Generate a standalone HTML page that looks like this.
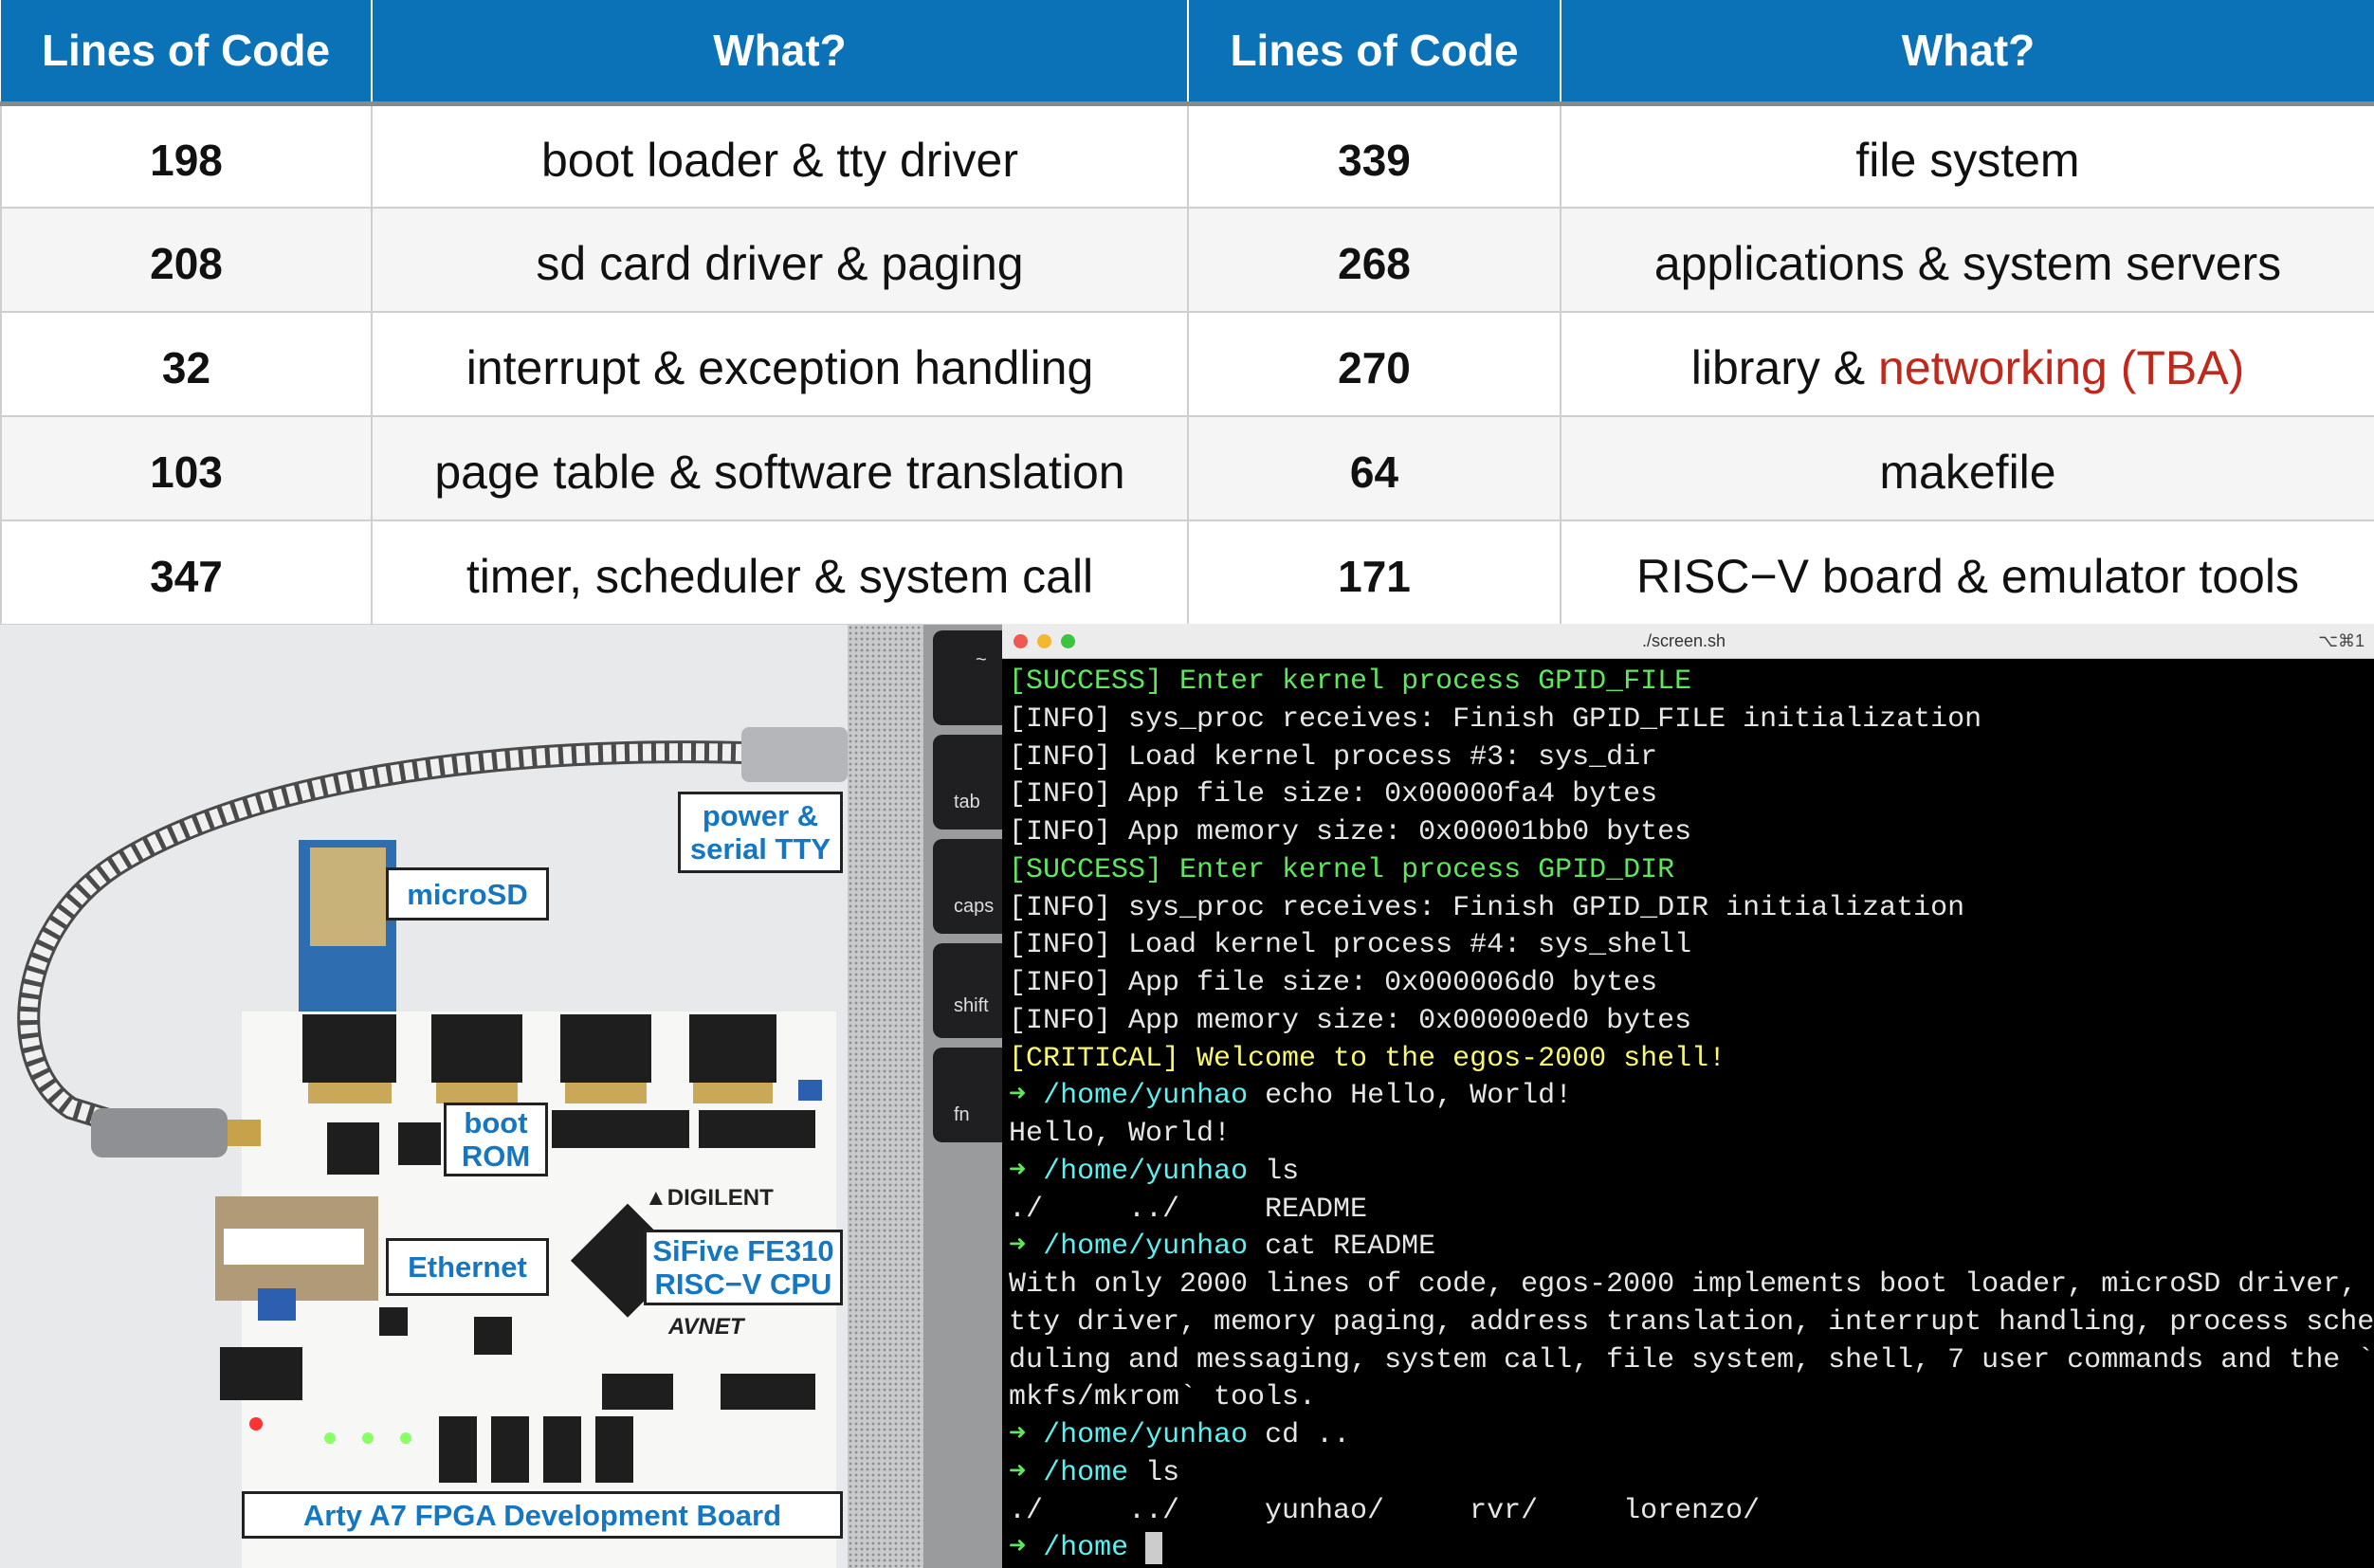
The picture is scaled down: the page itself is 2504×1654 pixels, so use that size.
<!DOCTYPE html>
<html><head><meta charset="utf-8"><style>
*{margin:0;padding:0;box-sizing:border-box}
body{width:2504px;height:1654px;overflow:hidden;background:#fff;font-family:"Liberation Sans",Arial,sans-serif;position:relative}
table{position:absolute;left:0;top:0;width:2504px;border-collapse:collapse;table-layout:fixed}
th{background:#0b72b7;color:#fff;font-size:46px;font-weight:bold;height:109px;border-left:2px solid #fff;border-bottom:5px solid #8a8a8a}
td{height:110px;font-size:50px;text-align:center;color:#111;border:2px solid #cfcfcf;padding-top:8px}
td.n{font-weight:bold;font-size:46px}
tr.g td{background:#f5f5f5}
.red{color:#c0281c}
.term{position:absolute;left:1057px;top:658px;width:1447px;height:996px;background:#000}
.tb{height:37px;background:#ececec;position:relative;border-bottom:1px solid #ccc}
.tb span{position:absolute;top:11px;width:15px;height:15px;border-radius:50%}
.tb .t{position:absolute;left:675px;top:8px;font-size:18px;color:#333}
.tx{font-family:"Liberation Mono","DejaVu Sans Mono",monospace;font-size:30px;line-height:39.75px;color:#e6e6e6;padding:5px 0 0 7px;white-space:pre}
.gr{color:#5fe65f}.ye{color:#f8f870}.cy{color:#5ef0f0}
.lbl{position:absolute;background:#fff;border:3px solid #222;color:#1577c2;font-weight:bold;text-align:center;font-size:31px;line-height:35px;display:flex;align-items:center;justify-content:center}
</style></head><body>
<table>
<colgroup><col style="width:391px"><col style="width:861px"><col style="width:393px"><col style="width:859px"></colgroup>
<tr><th style="border-left:none">Lines of Code</th><th>What?</th><th>Lines of Code</th><th>What?</th></tr>
<tr><td class="n">198</td><td>boot loader &amp; tty driver</td><td class="n">339</td><td>file system</td></tr>
<tr class="g"><td class="n">208</td><td>sd card driver &amp; paging</td><td class="n">268</td><td>applications &amp; system servers</td></tr>
<tr><td class="n">32</td><td>interrupt &amp; exception handling</td><td class="n">270</td><td>library &amp; <span class="red">networking (TBA)</span></td></tr>
<tr class="g"><td class="n">103</td><td>page table &amp; software translation</td><td class="n">64</td><td>makefile</td></tr>
<tr><td class="n">347</td><td>timer, scheduler &amp; system call</td><td class="n">171</td><td>RISC−V board &amp; emulator tools</td></tr>
</table>

<svg style="position:absolute;left:0;top:659px" width="894" height="995" viewBox="0 0 894 995">
<rect width="894" height="995" fill="#e8e9eb"/>
<rect x="255" y="408" width="627" height="587" fill="#f7f7f6"/>
<path d="M785 135 C 520 128, 260 165, 120 255 C 15 325, 5 465, 75 510 L 150 533" fill="none" stroke="#4a4a4a" stroke-width="24" stroke-linecap="round"/>
<path d="M785 135 C 520 128, 260 165, 120 255 C 15 325, 5 465, 75 510 L 150 533" fill="none" stroke="#f0f0f0" stroke-width="18" stroke-dasharray="9 5"/>
<rect x="782" y="108" width="112" height="58" rx="8" fill="#b4b6b9"/>
<rect x="96" y="510" width="144" height="52" rx="12" fill="#8e9093"/>
<rect x="240" y="522" width="35" height="28" fill="#c8a24a"/>
<rect x="315" y="227" width="103" height="181" fill="#2e6db0"/>
<rect x="327" y="235" width="80" height="104" fill="#c9b27a"/>
<g fill="#1e1e1e">
<rect x="319" y="411" width="99" height="72"/><rect x="455" y="411" width="96" height="72"/><rect x="591" y="411" width="96" height="72"/><rect x="727" y="411" width="92" height="72"/>
<rect x="582" y="512" width="145" height="40"/><rect x="737" y="512" width="123" height="40"/>
<rect x="345" y="525" width="55" height="55"/><rect x="420" y="525" width="45" height="45"/>
<rect x="620" y="628" width="85" height="85" transform="rotate(45 662 670)"/>
<rect x="232" y="762" width="87" height="56"/>
<rect x="463" y="835" width="40" height="70"/><rect x="518" y="835" width="40" height="70"/><rect x="573" y="835" width="40" height="70"/><rect x="628" y="835" width="40" height="70"/>
<rect x="635" y="790" width="75" height="38"/><rect x="760" y="790" width="100" height="38"/>
<rect x="500" y="730" width="40" height="40"/><rect x="400" y="720" width="30" height="30"/>
</g>
<g fill="#c9a85a"><rect x="325" y="483" width="88" height="22"/><rect x="460" y="483" width="86" height="22"/><rect x="596" y="483" width="86" height="22"/><rect x="731" y="483" width="84" height="22"/></g>
<rect x="227" y="603" width="172" height="110" fill="#b09a78"/>
<rect x="236" y="637" width="148" height="38" fill="#fff"/>
<rect x="272" y="700" width="40" height="34" fill="#2d5fb0"/>
<rect x="842" y="480" width="25" height="22" fill="#2d5fb0"/>
<circle cx="270" cy="843" r="7" fill="#f33"/>
<circle cx="348" cy="858" r="6" fill="#8f6"/><circle cx="388" cy="858" r="6" fill="#8f6"/><circle cx="428" cy="858" r="6" fill="#8f6"/>
<text x="680" y="612" font-family="Liberation Sans" font-weight="bold" font-size="24" fill="#222">▲DIGILENT</text>
<text x="705" y="748" font-family="Liberation Sans" font-weight="bold" font-style="italic" font-size="24" fill="#222">AVNET</text>
</svg>
<div class="lbl" style="left:715px;top:835px;width:174px;height:86px">power &amp;<br>serial TTY</div>
<div class="lbl" style="left:407px;top:915px;width:172px;height:56px">microSD</div>
<div class="lbl" style="left:468px;top:1163px;width:110px;height:78px">boot<br>ROM</div>
<div class="lbl" style="left:407px;top:1306px;width:172px;height:61px">Ethernet</div>
<div class="lbl" style="left:679px;top:1297px;width:210px;height:80px">SiFive FE310<br>RISC−V CPU</div>
<div class="lbl" style="left:255px;top:1573px;width:634px;height:50px">Arty A7 FPGA Development Board</div>

<div style="position:absolute;left:894px;top:659px;width:80px;height:995px;background:#c9cacc;background-image:radial-gradient(#8d8e90 1.2px,transparent 1.6px);background-size:6px 6px"></div>
<div style="position:absolute;left:974px;top:659px;width:83px;height:995px;background:#9a9b9d"></div>
<div style="position:absolute;left:984px;top:665px;width:73px;height:100px;background:#1f1f21;border-radius:10px 0 0 10px;color:#ddd;font-size:20px;padding:20px 0 0 45px">~</div>
<div style="position:absolute;left:984px;top:775px;width:73px;height:100px;background:#1f1f21;border-radius:10px 0 0 10px;color:#ddd;font-size:20px;padding:60px 0 0 22px">tab</div>
<div style="position:absolute;left:984px;top:885px;width:73px;height:100px;background:#1f1f21;border-radius:10px 0 0 10px;color:#ddd;font-size:20px;padding:60px 0 0 22px">caps</div>
<div style="position:absolute;left:984px;top:995px;width:73px;height:100px;background:#1f1f21;border-radius:10px 0 0 10px;color:#ddd;font-size:20px;padding:55px 0 0 22px">shift</div>
<div style="position:absolute;left:984px;top:1105px;width:73px;height:100px;background:#1f1f21;border-radius:10px 0 0 10px;color:#ddd;font-size:20px;padding:60px 0 0 22px">fn</div>

<div class="term">
<div class="tb"><span style="left:12px;background:#ee5a52"></span><span style="left:37px;background:#f4b830"></span><span style="left:62px;background:#3fc23d"></span><div class="t">./screen.sh</div><div style="position:absolute;right:10px;top:8px;font-size:18px;color:#444">⌥⌘1</div></div>
<div class="tx"><span class="gr">[SUCCESS] Enter kernel process GPID_FILE</span>
[INFO] sys_proc receives: Finish GPID_FILE initialization
[INFO] Load kernel process #3: sys_dir
[INFO] App file size: 0x00000fa4 bytes
[INFO] App memory size: 0x00001bb0 bytes
<span class="gr">[SUCCESS] Enter kernel process GPID_DIR</span>
[INFO] sys_proc receives: Finish GPID_DIR initialization
[INFO] Load kernel process #4: sys_shell
[INFO] App file size: 0x000006d0 bytes
[INFO] App memory size: 0x00000ed0 bytes
<span class="ye">[CRITICAL] Welcome to the egos-2000 shell!</span>
<span class="gr">➜</span> <span class="cy">/home/yunhao</span> echo Hello, World!
Hello, World!
<span class="gr">➜</span> <span class="cy">/home/yunhao</span> ls
./     ../     README
<span class="gr">➜</span> <span class="cy">/home/yunhao</span> cat README
With only 2000 lines of code, egos-2000 implements boot loader, microSD driver,
tty driver, memory paging, address translation, interrupt handling, process sche
duling and messaging, system call, file system, shell, 7 user commands and the `
mkfs/mkrom` tools.
<span class="gr">➜</span> <span class="cy">/home/yunhao</span> cd ..
<span class="gr">➜</span> <span class="cy">/home</span> ls
./     ../     yunhao/     rvr/     lorenzo/
<span class="gr">➜</span> <span class="cy">/home</span> <span style="background:#ccc"> </span></div>
</div>
</body></html>
